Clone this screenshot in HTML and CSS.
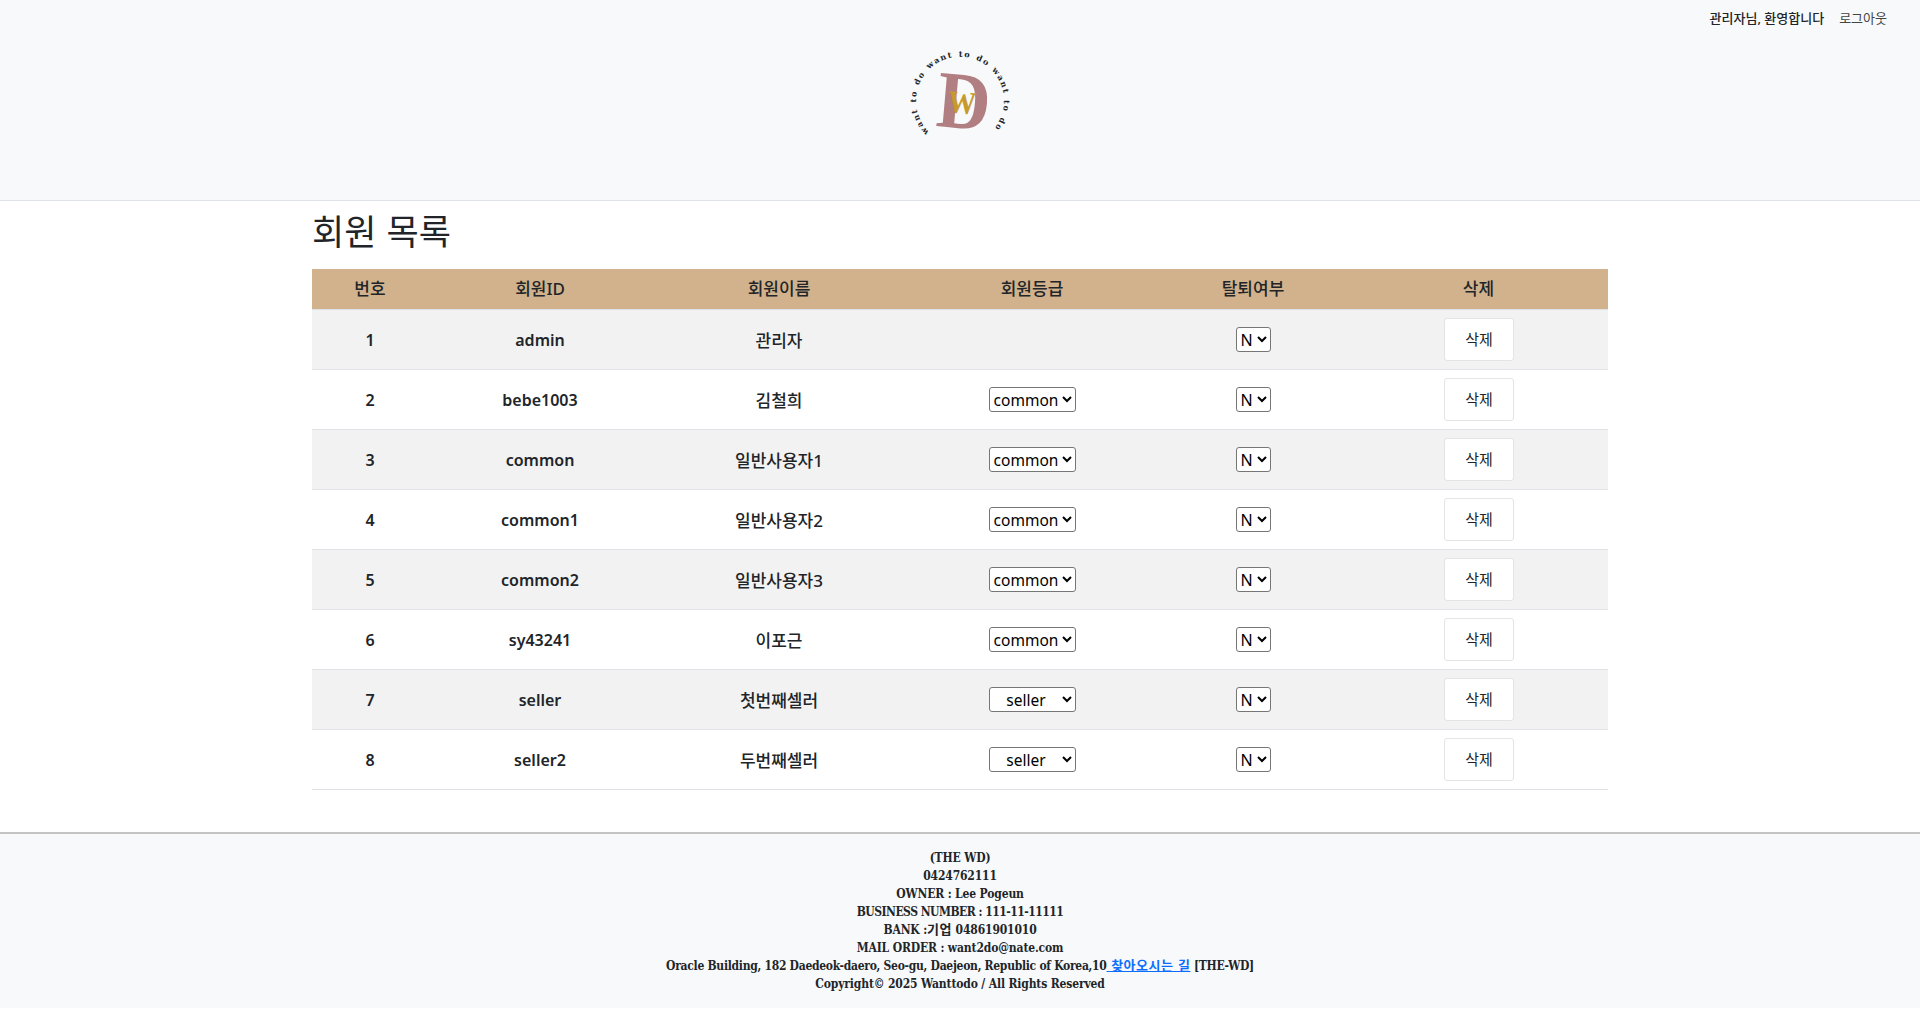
FILE: index.html
```html
<!DOCTYPE html>
<html lang="ko">
<head>
  <meta charset="UTF-8">
  <meta name="viewport" content="width=device-width, initial-scale=1.0">
  <title>회원 목록</title>
  <link rel="stylesheet" href="styles.css">
</head>
<body>

  <header class="site-header">
    <div class="user-menu">
      <span class="welcome">관리자님, 환영합니다</span>
      <a href="#" class="logout">로그아웃</a>
    </div>
    <a href="#" class="logo">
      <svg width="120" height="110" viewBox="0 0 120 110">
        <defs>
          <path id="logo-ring" d="M 29 86 A 44 44 0 1 1 91 86"></path>
        </defs>
        <text class="logo-ring-text"><textPath href="#logo-ring">want to do want to do want to do</textPath></text>
        <text class="logo-d" transform="translate(35 80) rotate(5) scale(1 1.1)">D</text>
        <text class="logo-w" transform="translate(47 66) rotate(5) scale(0.88 1)">W</text>
      </svg>
    </a>
  </header>

  <main class="member-list">
    <h2>회원 목록</h2>
    <table class="member-table">
      <colgroup>
        <col class="col-no">
        <col class="col-id">
        <col class="col-name">
        <col class="col-grade">
        <col class="col-quit">
        <col class="col-del">
      </colgroup>
      <thead>
        <tr>
          <th>번호</th>
          <th>회원ID</th>
          <th>회원이름</th>
          <th>회원등급</th>
          <th>탈퇴여부</th>
          <th>삭제</th>
        </tr>
      </thead>
      <tbody>
        <tr>
          <td>1</td>
          <td>admin</td>
          <td class="member-name">관리자</td>
          <td></td>
          <td><select class="quit-select"><option>N</option><option>Y</option></select></td>
          <td><button type="button" class="del-btn">삭제</button></td>
        </tr>
        <tr>
          <td>2</td>
          <td>bebe1003</td>
          <td class="member-name">김철희</td>
          <td><select class="grade-select"><option>common</option><option>seller</option></select></td>
          <td><select class="quit-select"><option>N</option><option>Y</option></select></td>
          <td><button type="button" class="del-btn">삭제</button></td>
        </tr>
        <tr>
          <td>3</td>
          <td>common</td>
          <td class="member-name">일반사용자1</td>
          <td><select class="grade-select"><option>common</option><option>seller</option></select></td>
          <td><select class="quit-select"><option>N</option><option>Y</option></select></td>
          <td><button type="button" class="del-btn">삭제</button></td>
        </tr>
        <tr>
          <td>4</td>
          <td>common1</td>
          <td class="member-name">일반사용자2</td>
          <td><select class="grade-select"><option>common</option><option>seller</option></select></td>
          <td><select class="quit-select"><option>N</option><option>Y</option></select></td>
          <td><button type="button" class="del-btn">삭제</button></td>
        </tr>
        <tr>
          <td>5</td>
          <td>common2</td>
          <td class="member-name">일반사용자3</td>
          <td><select class="grade-select"><option>common</option><option>seller</option></select></td>
          <td><select class="quit-select"><option>N</option><option>Y</option></select></td>
          <td><button type="button" class="del-btn">삭제</button></td>
        </tr>
        <tr>
          <td>6</td>
          <td>sy43241</td>
          <td class="member-name">이포근</td>
          <td><select class="grade-select"><option>common</option><option>seller</option></select></td>
          <td><select class="quit-select"><option>N</option><option>Y</option></select></td>
          <td><button type="button" class="del-btn">삭제</button></td>
        </tr>
        <tr>
          <td>7</td>
          <td>seller</td>
          <td class="member-name">첫번째셀러</td>
          <td><select class="grade-select"><option>seller</option><option>common</option></select></td>
          <td><select class="quit-select"><option>N</option><option>Y</option></select></td>
          <td><button type="button" class="del-btn">삭제</button></td>
        </tr>
        <tr>
          <td>8</td>
          <td>seller2</td>
          <td class="member-name">두번째셀러</td>
          <td><select class="grade-select"><option>seller</option><option>common</option></select></td>
          <td><select class="quit-select"><option>N</option><option>Y</option></select></td>
          <td><button type="button" class="del-btn">삭제</button></td>
        </tr>
      </tbody>
    </table>
  </main>

  <footer class="site-footer">
    <p>(THE WD)</p>
    <p>0424762111</p>
    <p>OWNER : Lee Pogeun</p>
    <p class="caps-line">BUSINESS NUMBER : 111-11-11111</p>
    <p>BANK :<span class="ko-text">기업</span> 04861901010</p>
    <p>MAIL ORDER : want2do@nate.com</p>
    <p class="address-line">Oracle Building, 182 Daedeok-daero, Seo-gu, Daejeon, Republic of Korea,10<a href="#" class="ko-text"> 찾아오시는 길</a> [THE-WD]</p>
    <p>Copyright© 2025 Wanttodo / All Rights Reserved</p>
  </footer>

</body>
</html>
```

FILE: styles.css
```css
html {
  background-color: #fff;
}

body {
  font-family: "Noto Sans", "Noto Sans CJK KR", sans-serif;
  color: #212529;
  background-color: #fff;
  width: 1920px;
  margin: 0;
  padding: 0;
}

.site-header {
  position: relative;
  height: 154px;
  background-color: #f8f9fa;
  border-bottom: 1px solid #dee2e6;
  display: flex;
  justify-content: center;
  padding-top: 46px;
}

.user-menu {
  position: absolute;
  top: 8px;
  right: 33px;
  font-size: 13px;
  line-height: 20px;
  display: flex;
  gap: 15px;
}

.welcome {
  font-weight: 500;
}

.logout {
  color: #444;
  text-decoration: none;
}

.logo {
  display: block;
  width: 120px;
  height: 110px;
}

.logo svg {
  display: block;
}

.logo-ring-text {
  font-family: "DejaVu Serif", serif;
  font-size: 8px;
  font-weight: 600;
  letter-spacing: 1.5px;
  word-spacing: 1px;
  fill: #222;
}

.logo-d {
  font-family: "Liberation Serif", serif;
  font-size: 74px;
  font-weight: bold;
  fill: #b17e82;
}

.logo-w {
  font-family: "Liberation Serif", serif;
  font-size: 32px;
  font-weight: bold;
  fill: #c79a2f;
}

.member-list {
  width: 1296px;
  margin: 0 auto;
  padding-bottom: 42px;
}

h2 {
  font-size: 35px;
  font-weight: 400;
  line-height: 42px;
  word-spacing: 1px;
  margin: 10px 0 16px;
}

.member-table {
  width: 1296px;
  border-collapse: collapse;
  table-layout: fixed;
}

.col-no { width: 116px; }
.col-id { width: 224px; }
.col-name { width: 254px; }
.col-grade { width: 252px; }
.col-quit { width: 190px; }
.col-del { width: 260px; }

.member-table th {
  height: 40px;
  padding: 0 0 2px;
  box-sizing: border-box;
  background-color: #d1b28c;
  font-size: 17px;
  font-weight: 500;
  text-align: center;
  border-bottom: 1px solid #dee2e6;
}

.member-table td {
  height: 59px;
  padding: 0;
  font-size: 16px;
  font-weight: 600;
  text-align: center;
  border-bottom: 1px solid #dee2e6;
}

.member-table td:nth-child(-n+2) {
  height: 57px;
  padding-top: 2px;
}

.member-table td.member-name {
  font-size: 17px;
  font-weight: 500;
}

.member-table td:last-child,
.member-table th:last-child {
  padding-left: 1px;
}

.member-table tbody tr:nth-child(odd) {
  background-color: #f2f2f2;
}

.grade-select,
.quit-select {
  height: 25px;
  font-family: "Noto Sans", sans-serif;
  font-size: 16px;
  color: #000;
  background-color: #fff;
  border: 1px solid #767676;
  border-radius: 3px;
  vertical-align: middle;
}

.grade-select {
  width: 87px;
  font-size: 15.5px;
  text-align: center;
}

.quit-select {
  width: 35px;
}

.del-btn {
  width: 70px;
  height: 43px;
  padding: 0 0 2px 1px;
  font-family: "Noto Sans", "Noto Sans CJK KR", sans-serif;
  font-size: 15px;
  color: #212529;
  background-color: #fff;
  border: 1px solid #e4e4e4;
  border-radius: 3px;
  vertical-align: middle;
}

.site-footer {
  background-color: #f8f9fa;
  border-top: 2px solid #c4c4c4;
  padding: 15px 0 15px;
  text-align: center;
  font-family: "DejaVu Serif", "Noto Sans CJK KR", serif;
  font-stretch: condensed;
  font-size: 12px;
  font-weight: bold;
  letter-spacing: -0.15px;
  line-height: 18px;
}

.site-footer p {
  margin: 0;
}

.site-footer .caps-line {
  letter-spacing: -0.5px;
}

.site-footer .address-line {
  letter-spacing: -0.28px;
}

.site-footer a {
  color: #0d6efd;
}

.ko-text {
  font-size: 13px;
  line-height: 1;
  letter-spacing: 0.5px;
}
```
